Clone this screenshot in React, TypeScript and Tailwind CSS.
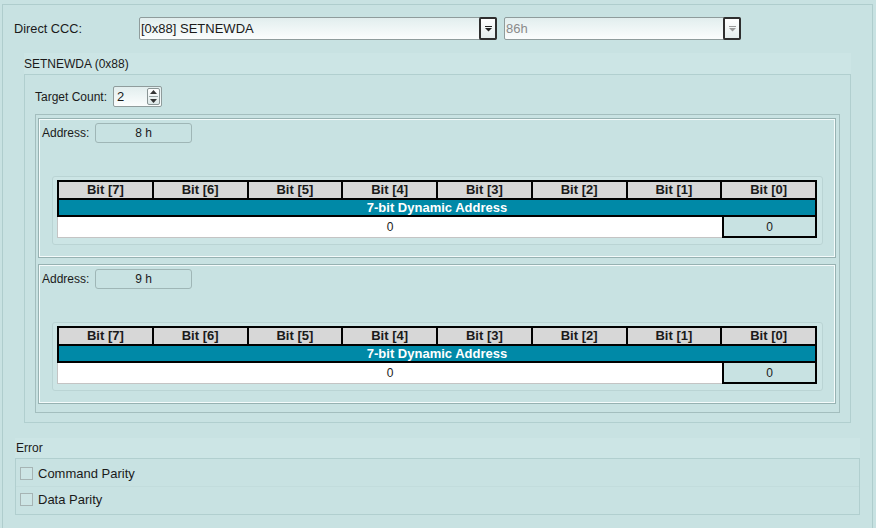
import React from 'react'

const bits = [7, 6, 5, 4, 3, 2, 1, 0]

function DropArrow({ muted }: { muted?: boolean }) {
  return (
    <svg width="9" height="6" viewBox="0 0 9 6">
      <rect x="1" y="0" width="7" height="1" fill={muted ? '#9a9a9a' : '#222'} />
      <path d="M1 2 L8 2 L4.5 5.5 Z" fill={muted ? '#9a9a9a' : '#222'} />
    </svg>
  )
}

function Select({ width, value, disabled }: { width: string; value: string; disabled?: boolean }) {
  return (
    <div
      className={`flex h-[23px] ${width} items-center rounded-[2px] border border-[#8f9c9c] bg-gradient-to-b from-[#e2eeee] to-[#fbfdfd]`}
    >
      <span className={`flex-1 pl-[1px] text-[13px] ${disabled ? 'text-[#8a8a8a]' : 'text-[#1a1a1a]'}`}>{value}</span>
      <div className="-mr-px flex h-[23px] w-[18px] items-center justify-center rounded-[2px] border-2 border-[#2f2f2f] bg-gradient-to-b from-white to-[#e4eded]">
        <DropArrow muted={disabled} />
      </div>
    </div>
  )
}

function BitTable() {
  return (
    <div className="w-[760px] text-[13px]">
      <div className="grid grid-cols-8 gap-x-[2px] border-2 border-black bg-black">
        {bits.map((b) => (
          <div key={b} className="flex h-[16px] items-center justify-center bg-[#d7d7d7] font-bold text-[#1a1a1a]">
            Bit [{b}]
          </div>
        ))}
      </div>
      <div className="flex h-[17px] items-center justify-center border-x-2 border-b-2 border-black bg-[#0089a7] font-bold text-white">
        7-bit Dynamic Address
      </div>
      <div className="flex h-[21px] text-[12px]">
        <div className="flex flex-1 items-center justify-center border-b border-l border-[#c4c4c4] bg-white">0</div>
        <div className="flex w-[95px] items-center justify-center border-x-2 border-b-2 border-black bg-[#c8e2e2]">0</div>
      </div>
    </div>
  )
}

function AddressCard({ address }: { address: string }) {
  return (
    <div className="h-[140px] w-[798px] border border-[#97b2b2] shadow-[inset_1px_1px_0_#f4fbfb,inset_-1px_-1px_0_#f4fbfb]">
      <div className="flex items-center pl-[3px] pt-[4px]">
        <span className="w-[53px]">Address:</span>
        <div className="flex h-[20px] w-[97px] items-center justify-center rounded-[3px] border border-[#9fb6b6] bg-[#c8e2e2]">
          {address}
        </div>
      </div>
      <div className="ml-[13px] mt-[33px] w-[771px] rounded-[3px] border border-[#bad4d4] bg-[#cce5e5] pb-[6px] pl-[4px] pt-[3px]">
        <BitTable />
      </div>
    </div>
  )
}

function Spinner() {
  return (
    <div className="flex h-[21px] w-[49px] items-center rounded-[2px] border border-[#8f9c9c] bg-gradient-to-b from-[#e2eeee] to-[#fbfdfd]">
      <span className="flex-1 pl-[3px] text-[13px]">2</span>
      <div className="mr-[1px] flex h-[17px] w-[13px] flex-col items-center justify-center gap-[2px] rounded-[2px] border border-[#8a9595] bg-gradient-to-b from-white to-[#dde8e8]">
        <svg width="7" height="4" viewBox="0 0 7 4">
          <path d="M0 4 L7 4 L3.5 0 Z" fill="#333" />
        </svg>
        <div className="h-px w-[9px] bg-[#9aa6a6]" />
        <svg width="7" height="4" viewBox="0 0 7 4">
          <path d="M0 0 L7 0 L3.5 4 Z" fill="#333" />
        </svg>
      </div>
    </div>
  )
}

function Check({ label }: { label: string }) {
  return (
    <div className="flex items-center">
      <div className="h-[13px] w-[13px] border border-[#a6b4b4] bg-[#cde5e5]" />
      <span className="ml-[5px] text-[13px]">{label}</span>
    </div>
  )
}

export default function App() {
  return (
    <div className="h-[528px] w-[876px] overflow-hidden bg-[#c8e2e2] pl-[2px] pt-[4px] font-['Liberation_Sans',Arial,sans-serif] text-[12px] text-[#1a1a1a]">
      <div className="h-[540px] w-[871px] border border-[#afcdcd]">
        {/* Direct CCC */}
        <div className="mt-[12px] flex items-center">
          <span className="w-[136px] pl-[11px] text-[12.75px]">Direct CCC:</span>
          <Select width="w-[358px]" value="[0x88] SETNEWDA" />
          <div className="ml-[7px]">
            <Select width="w-[237px]" value="86h" disabled />
          </div>
        </div>

        {/* SETNEWDA group */}
        <div className="ml-[21px] mt-[13px] w-[827px]">
          <div className="flex h-[21px] items-center bg-[#cce5e5]">SETNEWDA (0x88)</div>
          <div className="h-[349px] border border-[#b1cfcf]">
            <div className="flex items-center pl-[10px] pt-[11px]">
              <span className="w-[78px]">Target Count:</span>
              <Spinner />
            </div>
            <div className="ml-[10px] mt-[7px] flex h-[299px] w-[805px] flex-col gap-[6px] border border-[#a3bebe] pl-[2px] pt-[3px]">
              <AddressCard address="8 h" />
              <AddressCard address="9 h" />
            </div>
          </div>
        </div>

        {/* Error group */}
        <div className="ml-[12px] mt-[15px] w-[845px]">
          <div className="flex h-[20px] items-center bg-[#cce5e5] pl-[1px]">Error</div>
          <div className="h-[57px] border border-[#b1cfcf]">
            <div className="flex h-[28px] items-center border-b border-[#c2dcdc] pl-[4px] pt-[2px]">
              <Check label="Command Parity" />
            </div>
            <div className="flex h-[27px] items-center pb-[2px] pl-[4px]">
              <Check label="Data Parity" />
            </div>
          </div>
        </div>
      </div>
    </div>
  )
}
